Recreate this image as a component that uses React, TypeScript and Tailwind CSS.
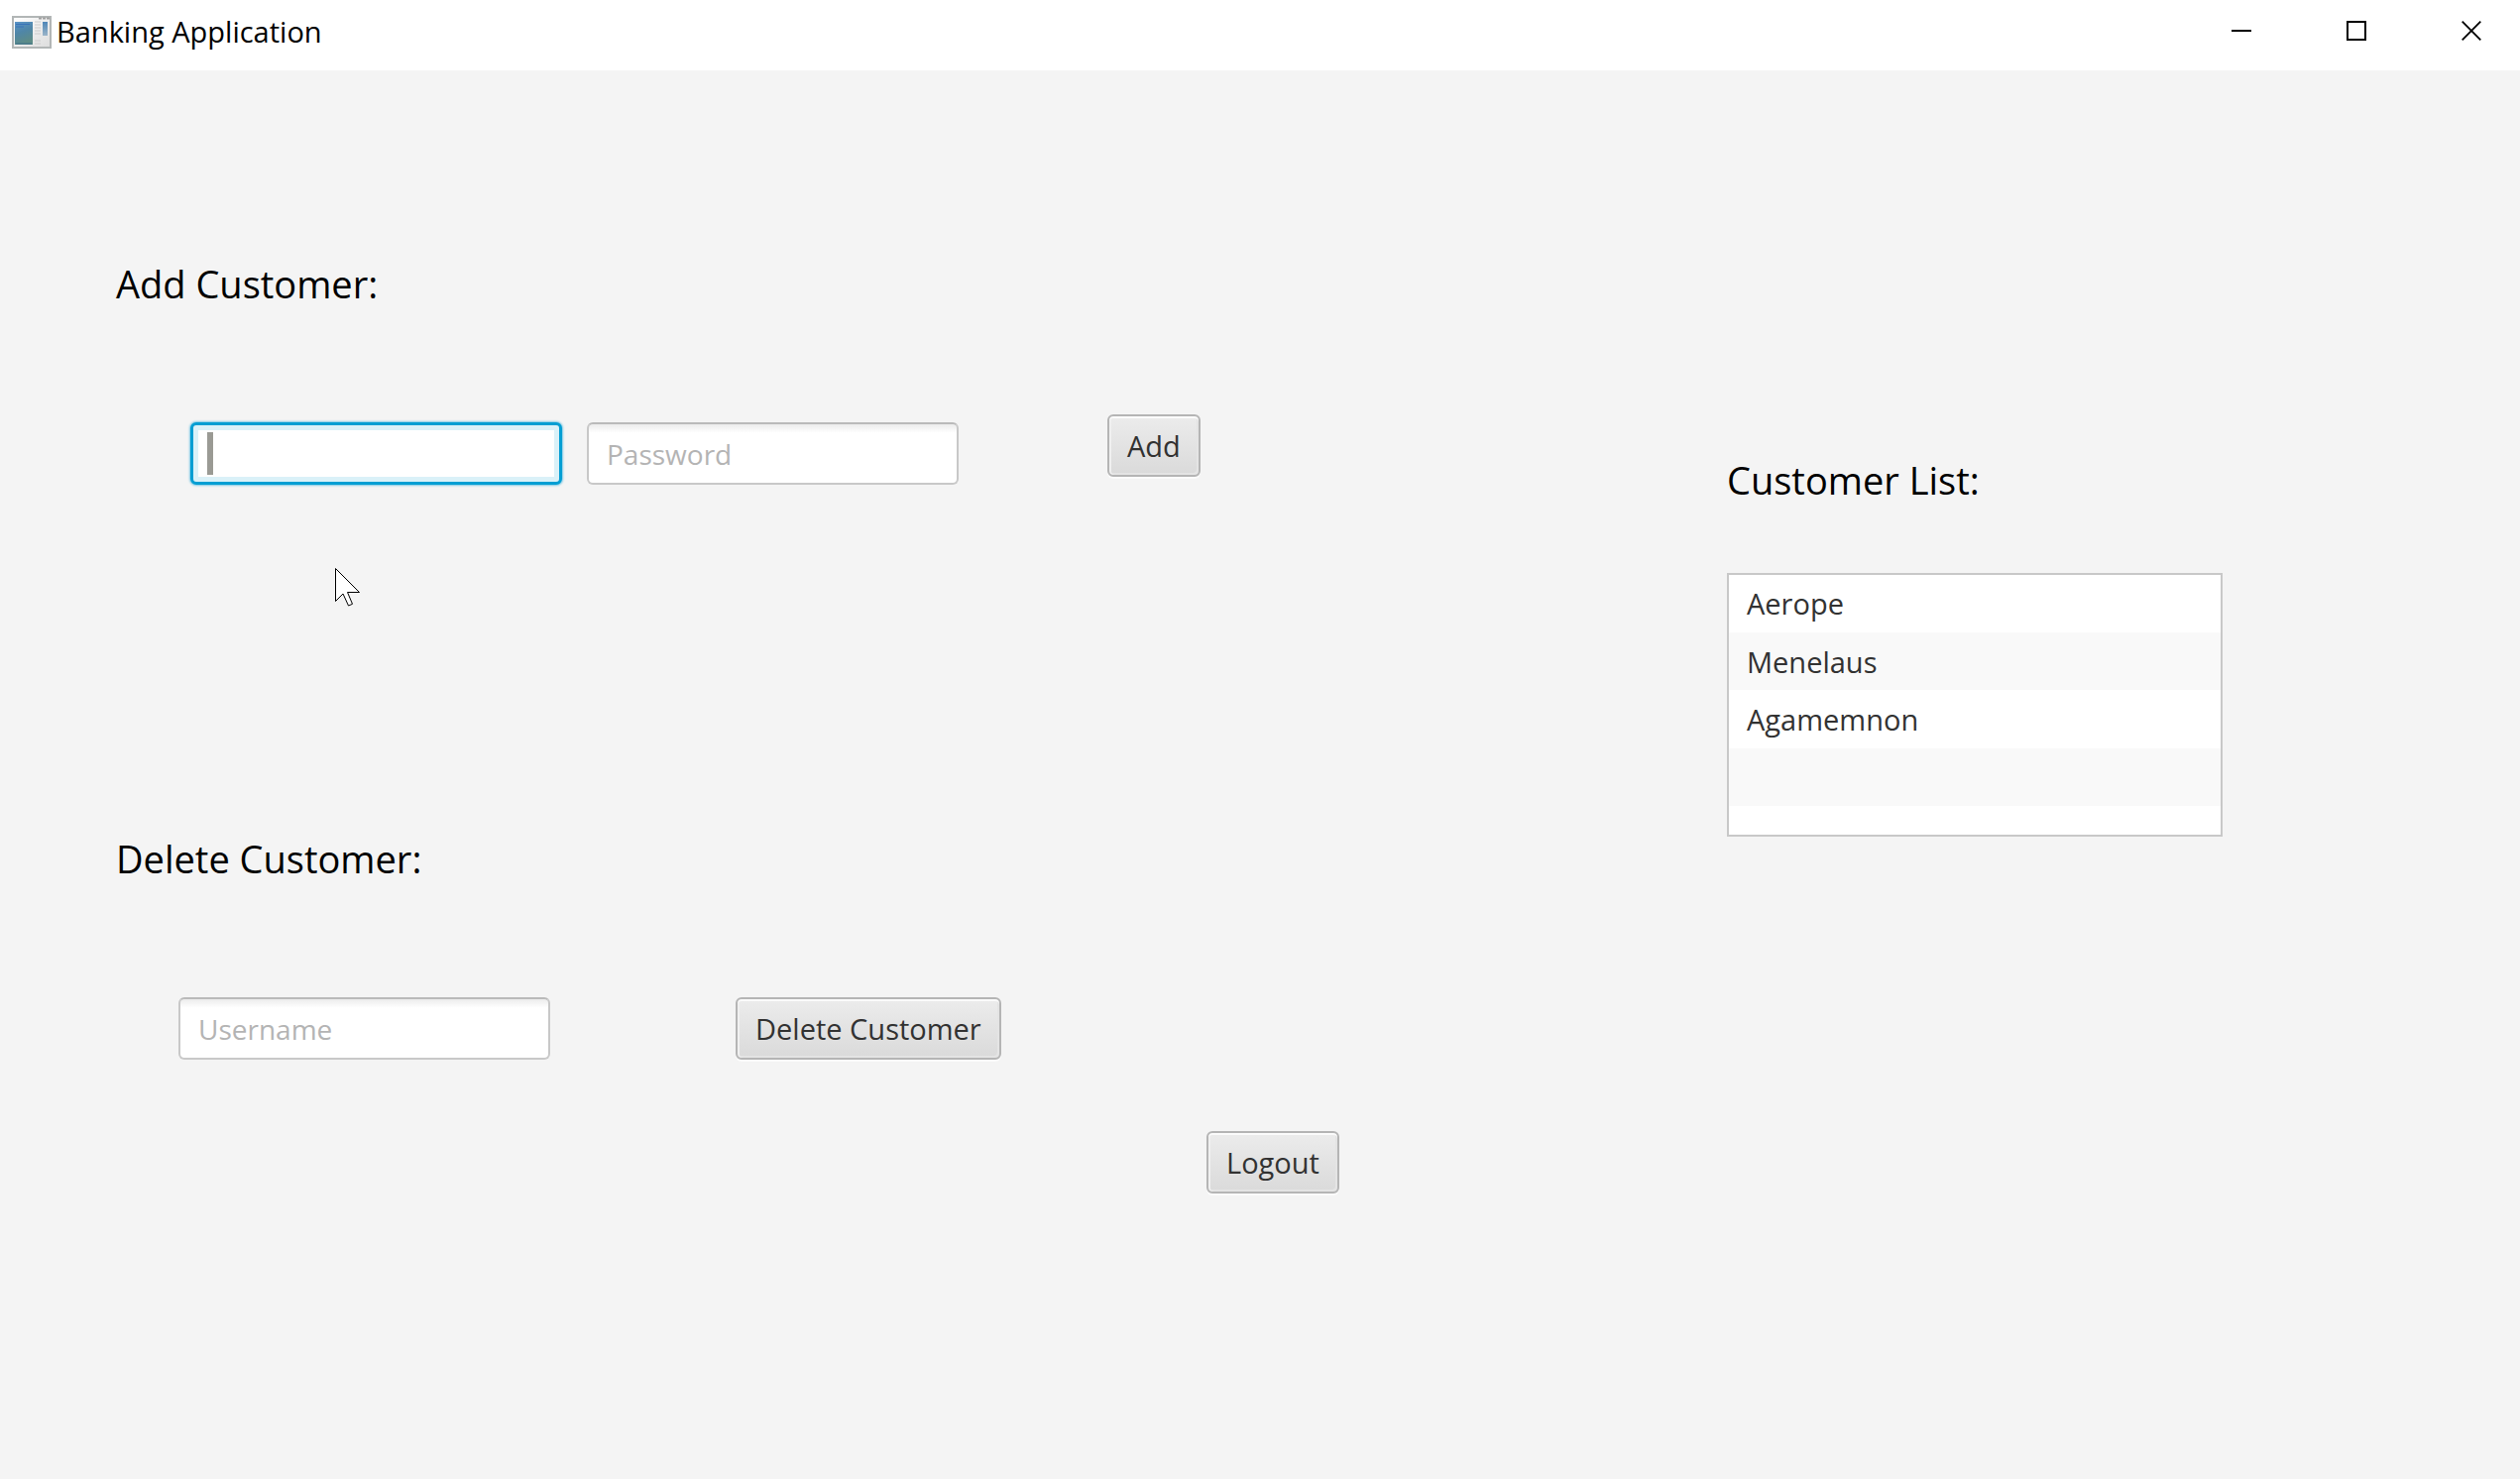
import React, { useState } from "react";

const customers = ["Aerope", "Menelaus", "Agamemnon"];

const headingClass = "text-[38px] leading-[54px] text-black";
const fieldClass =
  "h-[63px] w-[375px] rounded-md px-[18px] text-[28px] text-[#323232] outline-none placeholder:text-[#b4b4b4]";
const restingClass =
  "border-2 border-[#c8c8c8] border-t-[#bababa] bg-white bg-linear-to-b from-[#ececec] from-0% to-white to-15%";
const focusedClass =
  "border-[3px] border-[#039ed3] bg-white caret-transparent shadow-[0_0_2px_1px_#7cc8e4,inset_0_0_0_5px_#daf1f8]";
const buttonClass =
  "h-[63px] rounded-md border-2 border-[#b5b5b5] bg-linear-to-b from-[#ececec] to-[#dadada] px-[18px] text-[29px] text-[#323232] shadow-[0_2px_0_#fbfbfb,inset_0_2px_0_#fbfbfb,inset_2px_0_0_#f0f0f0,inset_-2px_-2px_0_#e4e4e4]";
const captionButtonClass = "flex h-[62px] w-[98px] items-center justify-center";

function AppIcon() {
  return (
    <svg width="40" height="33" viewBox="0 0 40 33" aria-hidden="true">
      <defs>
        <linearGradient id="pane" x1="0" y1="0" x2="0.3" y2="1">
          <stop offset="0" stopColor="#5a93c8" />
          <stop offset="0.5" stopColor="#4f86a8" />
          <stop offset="1" stopColor="#5d8c86" />
        </linearGradient>
        <linearGradient id="frame" x1="0" y1="0" x2="1" y2="1">
          <stop offset="0" stopColor="#ffffff" />
          <stop offset="1" stopColor="#dcdcdc" />
        </linearGradient>
        <linearGradient id="strip" x1="0" y1="0" x2="0" y2="1">
          <stop offset="0" stopColor="#4f86b8" />
          <stop offset="1" stopColor="#9ab4c8" />
        </linearGradient>
      </defs>
      <rect x="1" y="1" width="38" height="31" fill="url(#frame)" stroke="#b2b6b6" strokeWidth="2" />
      <path d="M27 2.500h11" stroke="#a0a0a0" strokeWidth="2" strokeDasharray="3 1" />
      <rect x="3" y="6" width="18" height="23" fill="url(#pane)" />
      <path d="M4 8.500h14M4 11h8" stroke="#3a73b8" strokeWidth="1" />
      <path d="M4 28h16" stroke="#3f6f8c" strokeWidth="1" />
      <path d="M23 6h6M23 9h6M23 12h6M23 15h6M23 18h6M23 25h6M23 28h6" stroke="#cccccc" strokeWidth="1" />
      <rect x="31" y="6" width="5" height="14" fill="url(#strip)" />
    </svg>
  );
}

function TitleBar() {
  return (
    <header className="flex h-[71px] items-start bg-white">
      <div className="flex items-center gap-[5px] pt-[7px] pl-[12px]">
        <AppIcon />
        <h1 className="text-[29px] leading-[50px] text-black">Banking Application</h1>
      </div>
      <div className="ml-auto flex gap-[18px]">
        <button type="button" aria-label="Minimize" className={captionButtonClass}>
          <svg width="20" height="20" viewBox="0 0 20 20"><path d="M0 10h20" stroke="#000" strokeWidth="2" /></svg>
        </button>
        <button type="button" aria-label="Maximize" className={captionButtonClass}>
          <svg width="20" height="20" viewBox="0 0 20 20"><rect x="1" y="1" width="18" height="18" fill="none" stroke="#000" strokeWidth="2" /></svg>
        </button>
        <button type="button" aria-label="Close" className={captionButtonClass}>
          <svg width="20" height="20" viewBox="0 0 20 20"><path d="M.7.7l18.600 18.600M19.300.7L.7 19.300" stroke="#000" strokeWidth="1.800" /></svg>
        </button>
      </div>
    </header>
  );
}

function Pointer() {
  return (
    <svg className="pointer-events-none absolute top-[155px] left-[146px]" width="27" height="40" viewBox="0 0 27 40" aria-hidden="true">
      <path d="M.5.500V33.500L8 26L13.500 38L17.500 36.300L12.500 24.500H24.500Z" fill="#fff" stroke="#000" strokeWidth="1" />
    </svg>
  );
}

export default function App() {
  const [name, setName] = useState("");
  return (
    <div className="flex min-h-screen flex-col bg-[#f4f4f4] font-['Open_Sans','Noto_Sans',sans-serif]">
      <TitleBar />
      <main className="flex flex-1 items-start justify-between pr-[300px] pl-[117px]">
        <div className="flex flex-col pt-[188px]">
          <section>
            <h2 className={headingClass}>Add Customer:</h2>
            <form className="relative mt-[105px] ml-[75px] flex items-start" onSubmit={(e) => e.preventDefault()}>
              <div className="relative mt-2 mr-[25px]">
                <input
                  type="text"
                  aria-label="New customer username"
                  value={name}
                  onChange={(e) => setName(e.target.value)}
                  className={`${fieldClass} ${focusedClass}`}
                />
                {name === "" && <span className="pointer-events-none absolute top-[10px] left-[17px] h-[43px] w-[6px] bg-[#9a9a94]" />}
              </div>
              <input type="password" aria-label="New customer password" placeholder="Password" className={`mt-2 ${fieldClass} ${restingClass}`} />
              <button type="submit" className={`ml-[150px] ${buttonClass}`}>Add</button>
              <Pointer />
            </form>
          </section>
          <section className="mt-[350px]">
            <h2 className={headingClass}>Delete Customer:</h2>
            <form className="mt-[113px] ml-[63px] flex items-start gap-[187px]" onSubmit={(e) => e.preventDefault()}>
              <input type="text" aria-label="Username to delete" placeholder="Username" className={`${fieldClass} ${restingClass}`} />
              <button type="submit" className={buttonClass}>Delete Customer</button>
            </form>
          </section>
          <button type="button" className={`mt-[72px] ml-[1100px] self-start ${buttonClass}`}>Logout</button>
        </div>
        <section className="w-[500px] pt-[386px]">
          <h2 className={headingClass}>Customer List:</h2>
          <ul className="mt-[67px] grid h-[266px] grid-rows-[2fr_2fr_2fr_2fr_1fr] border-2 border-[#c8c8c8] bg-white">
            {customers.map((c) => (
              <li key={c} className="flex items-center px-[18px] text-[29px] text-[#323232] even:bg-[#f9f9f9]">{c}</li>
            ))}
            <li className="even:bg-[#f9f9f9]" />
          </ul>
        </section>
      </main>
    </div>
  );
}
